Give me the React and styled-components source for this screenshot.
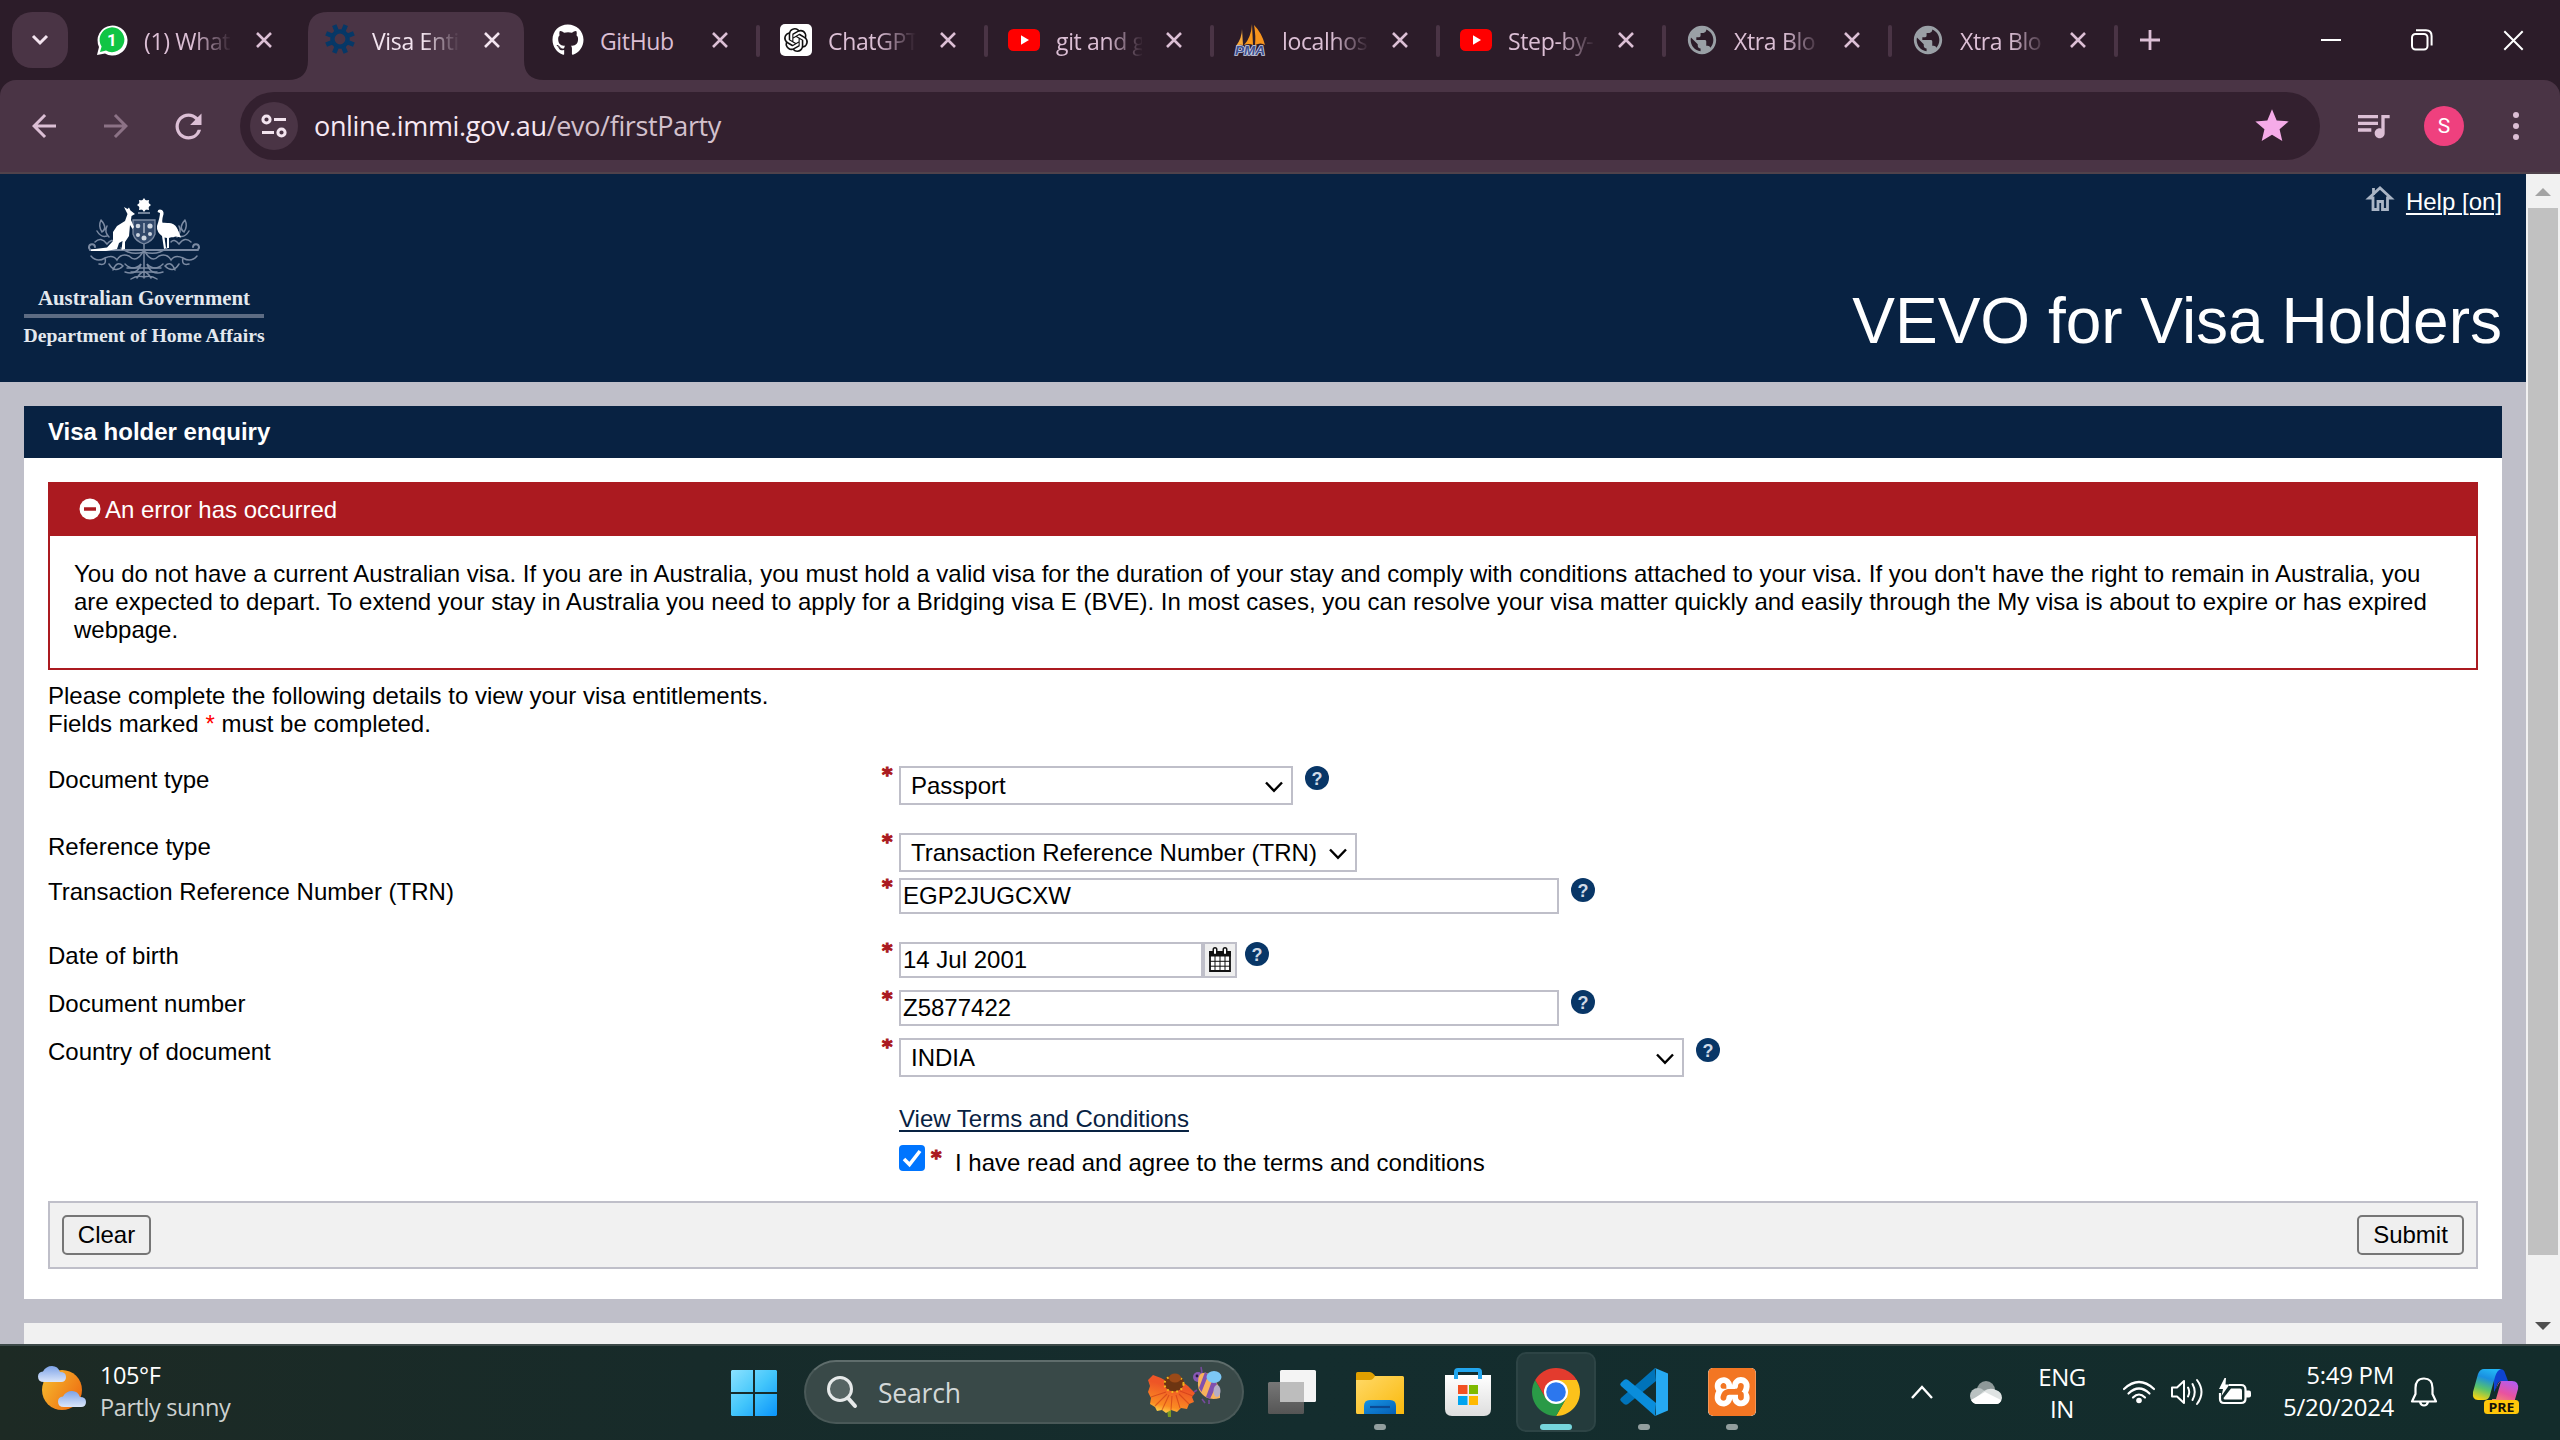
import React from "react";
import styled, { createGlobalStyle, css } from "styled-components";
import { MdArrowBack, MdArrowForward, MdRefresh, MdStar, MdQueueMusic, MdPublic } from "react-icons/md";
import { FaGithub } from "react-icons/fa";
import { SiOpenai, SiXampp } from "react-icons/si";

const ui = `"Open Sans", "Noto Sans", sans-serif`;
const arial = `"Liberation Sans", Arial, sans-serif`;
const navy = "#082242";
const line = "#bfbfc9";

const Global = createGlobalStyle`
  *, *::before, *::after { box-sizing: border-box; }
  html, body { margin: 0; background: ${line}; overflow: hidden; }
  svg { display: block; flex: none; overflow: visible; }
`;

const Screen = styled.div`
  width: 2560px;
  height: 1440px;
  display: flex;
  flex-direction: column;
  overflow: hidden;
`;

/* ---------- browser chrome ---------- */
const TabStrip = styled.div`
  height: 80px;
  flex: none;
  display: flex;
  align-items: flex-start;
  background: #2c1c29;
  padding-left: 12px;
`;
const TabSearch = styled.div`
  width: 56px;
  height: 56px;
  margin: 12px 8px 0 0;
  border-radius: 20px;
  background: #4a3445;
  display: flex;
  align-items: center;
  justify-content: center;
`;
const Tab = styled.div`
  position: relative;
  width: ${(p) => (p.$narrow ? 226 : 228)}px;
  height: 80px;
  flex: none;
  display: flex;
  align-items: center;
  padding-left: 20px;
  z-index: 1;
`;
const ActiveShape = styled.svg`
  position: absolute;
  left: -16px;
  top: 12px;
  z-index: -1;
`;
const Favicon = styled.div`
  width: 32px;
  height: 32px;
  display: flex;
  align-items: center;
  justify-content: center;
  flex: none;
`;
const OpenAiTile = styled.div`
  width: 32px;
  height: 32px;
  border-radius: 5px;
  background: #fff;
  color: #111;
  display: flex;
  align-items: center;
  justify-content: center;
`;
const TabTitle = styled.div`
  width: ${(p) => (p.$narrow ? 86 : 88)}px;
  margin-left: 16px;
  flex: none;
  overflow: hidden;
  white-space: nowrap;
  font: 400 23px/34px ${ui};
  letter-spacing: -0.35px;
  color: ${(p) => (p.$active ? "#f3e4ef" : "#dcbfd5")};
  padding-top: 2px;
  ${(p) => p.$fade && css`mask-image: linear-gradient(90deg, #000 50px, transparent 88px);`}
`;
const TabClose = styled.div`
  width: 16px;
  height: 16px;
  margin-left: 24px;
`;
const Separator = styled.div`
  position: absolute;
  right: 0;
  top: 25px;
  width: 4px;
  height: 32px;
  border-radius: 2px;
  background: #4a3445;
`;
const NewTab = styled.div`
  margin: 30px 0 0 22px;
`;
const WindowButtons = styled.div`
  margin: 29px 36px 0 auto;
  display: flex;
  align-items: center;
  gap: 70px;
`;
const ToolbarBack = styled.div`
  height: 94px;
  flex: none;
  background: #2c1c29;
`;
const Toolbar = styled.div`
  height: 94px;
  display: flex;
  align-items: center;
  background: #4a3445;
  border-bottom: 2px solid #50424b;
  border-radius: 16px 16px 0 0;
  padding-left: 26px;
  color: #dcbfd5;
`;
const NavIcon = styled.div`
  width: 36px;
  height: 36px;
  margin-right: 36px;
  opacity: ${(p) => (p.$dim ? 0.45 : 1)};
  display: flex;
  align-items: center;
  justify-content: center;
`;
const Omnibox = styled.div`
  width: 2080px;
  height: 68px;
  margin-left: -2px;
  border-radius: 34px;
  background: #33202f;
  display: flex;
  align-items: center;
  padding: 0 28px 0 10px;
`;
const SiteInfo = styled.div`
  width: 48px;
  height: 48px;
  border-radius: 24px;
  background: #4a3445;
  display: flex;
  align-items: center;
  justify-content: center;
  margin-right: 16px;
`;
const Url = styled.div`
  flex: 1;
  font: 400 27px/40px ${ui};
  letter-spacing: -0.35px;
  color: #f7e8f3;
`;
const UrlPath = styled.span`
  color: #d3c1cd;
`;
const Media = styled.div`
  margin: -2px 0 0 33px;
`;
const Avatar = styled.div`
  width: 40px;
  height: 40px;
  margin-left: 31px;
  border-radius: 50%;
  background: #ef407e;
  color: #fff;
  font: 400 21px/40px Roboto, sans-serif;
  text-align: center;
`;
const MenuDots = styled.div`
  display: flex;
  flex-direction: column;
  gap: 5px;
  margin-left: 49px;
`;
const Dot = styled.span`
  width: 6px;
  height: 6px;
  border-radius: 3px;
  background: #dcbfd5;
`;

/* ---------- page ---------- */
const Viewport = styled.div`
  height: 1170px;
  flex: none;
  display: flex;
  overflow: hidden;
  font: 400 24px/28px ${arial};
  color: #000;
`;
const Page = styled.div`
  width: 2526px;
  background: ${line};
`;
const Header = styled.header`
  height: 208px;
  background: ${navy};
  color: #fff;
  display: flex;
  justify-content: space-between;
  padding: 0 24px;
`;
const Brand = styled.div`
  width: 240px;
  padding-top: 24px;
  display: flex;
  flex-direction: column;
  align-items: center;
  font: 700 19.6px/22px "Liberation Serif", "Times New Roman", serif;
  color: #e3e8ee;
  white-space: nowrap;
`;
const BrandTop = styled.div`
  margin-top: 7px;
  font-size: 20.8px;
`;
const BrandRule = styled.div`
  width: 240px;
  height: 4px;
  margin: 5px 0 6px;
  background: #5d6c83;
`;
const BrandBottom = styled.div`
  font-size: 19.7px;
`;
const HeaderRight = styled.div`
  display: flex;
  flex-direction: column;
  align-items: flex-end;
`;
const HelpRow = styled.div`
  display: flex;
  align-items: flex-start;
  gap: 13px;
  padding-top: 12px;
`;
const HelpLink = styled.span`
  margin-top: 2px;
  text-decoration: underline;
  text-decoration-thickness: 2px;
  text-underline-offset: 3px;
`;
const AppTitle = styled.h1`
  margin: 68px 0 0;
  font: 400 64px/74px ${arial};
`;
const Panel = styled.section`
  width: 2478px;
  height: 893px;
  margin: 24px 0 0 24px;
  background: #fff;
`;
const PanelTitle = styled.div`
  height: 52px;
  padding: 12px 24px;
  background: ${navy};
  color: #fff;
  font-weight: 700;
`;
const PanelBody = styled.div`
  padding: 24px;
`;
const ErrorBox = styled.div`
  height: 188px;
  border: 2px solid #ab1a20;
`;
const ErrorHead = styled.div`
  height: 52px;
  padding: 12px 0 0 29px;
  background: #ab1a20;
  color: #fff;
  display: flex;
  gap: 4px;
`;
const ErrorIcon = styled.div`
  margin-top: 2px;
`;
const ErrorText = styled.div`
  padding: 24px 24px 0;
`;
const Intro = styled.div`
  margin-top: 12px;
`;
const Star = styled.span`
  color: #f00;
`;
const Required = styled.span`
  margin-top: -2px;
  padding-left: 1px;
  color: #ab1a20;
  font: 700 20px/20px "DejaVu Sans", sans-serif;
  -webkit-text-stroke: 1.1px #ab1a20;
`;
const Row = styled.div`
  display: grid;
  grid-template-columns: 833px 18px auto;
  margin-top: ${(p) => p.$gap}px;
`;
const Controls = styled.div`
  display: flex;
  align-items: flex-start;
`;
const Field = styled.div`
  width: ${(p) => p.$w}px;
  height: 36px;
  border: 2px solid ${line};
  background: #fff;
  padding: 2px;
  white-space: nowrap;
`;
const Select = styled(Field)`
  height: 39px;
  padding: 3.5px 8px 0 10px;
  display: flex;
  justify-content: space-between;
`;
const SelectArrow = styled.div`
  padding-top: 9px;
`;
const CalButton = styled.div`
  width: 34px;
  height: 36px;
  border: 2px solid ${line};
  background: #efefef;
  display: flex;
  align-items: flex-start;
  justify-content: center;
  padding-top: 3px;
`;
const HelpDot = styled.div`
  margin-left: ${(p) => p.$ml || 12}px;
  width: 24px;
  height: 24px;
  border-radius: 50%;
  background: #083667;
  color: #cfdae7;
  font: 700 18px/26px ${arial};
  text-align: center;
`;
const Terms = styled.div`
  margin: 28px 0 0 851px;
  color: ${navy};
  text-decoration: underline;
  text-decoration-thickness: 2px;
  text-underline-offset: 3px;
`;
const Agree = styled.div`
  display: flex;
  margin: 12px 0 0 851px;
`;
const Checkbox = styled.div`
  width: 26px;
  height: 26px;
  border-radius: 4px;
  background: #0075ff;
  margin-right: 5px;
`;
const RequiredSlot = styled.div`
  width: 25px;
  padding-top: 4px;
  display: flex;
  align-items: flex-start;
`;
const AgreeText = styled.div`
  margin-top: 4px;
`;
const ButtonBar = styled.div`
  height: 68px;
  margin-top: 24px;
  padding: 12px;
  border: 2px solid ${line};
  background: #f1f1f1;
  display: flex;
  justify-content: space-between;
`;
const Button = styled.div`
  height: 40px;
  width: ${(p) => p.$w}px;
  border: 2px solid #767676;
  border-radius: 5px;
  background: #efefef;
  line-height: 36px;
  text-align: center;
`;
const Footer = styled.div`
  width: 2478px;
  height: 60px;
  margin: 24px 0 0 24px;
  background: #f1f1f1;
`;
const Scrollbar = styled.div`
  width: 34px;
  background: #f1f1f1;
  display: flex;
  flex-direction: column;
  align-items: center;
  padding: 14px 0;
`;
const Arrow = styled.div`
  border: 8px solid transparent;
  border-top-width: ${(p) => (p.$up ? 0 : 8)}px;
  border-bottom-width: ${(p) => (p.$up ? 8 : 0)}px;
  border-bottom-color: ${(p) => (p.$up ? "#a3a3a3" : "transparent")};
  border-top-color: ${(p) => (p.$up ? "transparent" : "#505050")};
`;
const Thumb = styled.div`
  width: 30px;
  height: 1047px;
  margin: 12px 0 67px;
  background: #c1c1c1;
`;

/* ---------- taskbar ---------- */
const Taskbar = styled.div`
  height: 96px;
  flex: none;
  border-top: 2px solid #3d4a49;
  padding-bottom: 2px;
  background: linear-gradient(90deg, #1d2a24 0, #172b2a 700px, #142d2e 1300px, #132c2b 100%);
  display: flex;
  align-items: center;
  color: #fff;
  font: 400 23.5px/32px ${ui};
`;
const Weather = styled.div`
  width: 731px;
  height: 92px;
  padding: 13px 0 0 38px;
  display: flex;
  gap: 14px;
  letter-spacing: -0.4px;
`;
const WeatherIcon = styled.div`
  padding-top: 6px;
`;
const Muted = styled.div`
  color: #cdd2d1;
`;
const StartButton = styled.div`
  padding-top: 2px;
`;
const SearchBox = styled.div`
  width: 440px;
  height: 64px;
  margin: 0 8px 0 27px;
  border-radius: 32px;
  background: #394948;
  border: 2px solid #4a5958;
  border-top-color: #5f6d6c;
  display: flex;
  align-items: center;
  padding: 0 18px 0 20px;
`;
const SearchText = styled.div`
  flex: 1;
  margin-left: 20px;
  padding-top: 2px;
  color: #d3d8d8;
  font-size: 26.5px;
  letter-spacing: -0.2px;
`;
const AppSlot = styled.div`
  width: 80px;
  height: 80px;
  margin-right: 8px;
  border-radius: 10px;
  display: flex;
  flex-direction: column;
  align-items: center;
  padding-top: 14px;
  border: 2px solid transparent;
  ${(p) => p.$active && css`background: #243b3c; border-color: #2d4445;`}
`;
const Indicator = styled.div`
  width: ${(p) => (p.$active ? 32 : 12)}px;
  height: 6px;
  margin-top: 8px;
  border-radius: 3px;
  background: ${(p) => (p.$active ? "#76d6dc" : "#929e9e")};
`;
const XamppTile = styled.div`
  width: 48px;
  height: 48px;
  border-radius: 5px;
  background: #fff;
  color: #f37623;
  overflow: hidden;
`;
const Tray = styled.div`
  margin-left: auto;
  height: 92px;
  display: flex;
  align-items: center;
`;
const TrayItem = styled.div`
  width: ${(p) => p.$w}px;
  margin-left: ${(p) => p.$ml}px;
`;
const Lang = styled.div`
  width: 60px;
  margin-left: 30px;
  padding-top: 2px;
  text-align: center;
  font-size: 24px;
  letter-spacing: -0.5px;
`;
const Clock = styled.div`
  width: 130px;
  margin-left: 12px;
  text-align: right;
  font-size: 24px;
  letter-spacing: -0.3px;
  margin-top: -3px;
`;

const Cross = ({ size = 16, w = 2.6, color = "currentColor" }) => (
  <svg width={size} height={size} viewBox="0 0 16 16" stroke={color} strokeWidth={w} fill="none">
    <path d="M1 1 15 15M15 1 1 15" />
  </svg>
);
const WhatsApp = () => (
  <svg width="32" height="32" viewBox="0 0 32 32">
    <path d="M1 31 3 23A15 15 0 1 1 9 29.5Z" fill="#fff" />
    <path d="M4 28 5.6 22.5A12.4 12.4 0 1 1 10 26.6Z" fill="#10c544" />
    <text x="16" y="22" textAnchor="middle" fontFamily="Roboto" fontWeight="700" fontSize="17" fill="#fff">1</text>
  </svg>
);
const Gear = () => (
  <svg width="32" height="32" viewBox="0 0 32 32" stroke="#063867" fill="none">
    <circle cx="16" cy="15" r="7.6" strokeWidth="4.4" />
    {[22.5, 67.5, 112.5, 157.5, 202.5, 247.5, 292.5, 337.5].map((a) => (
      <path key={a} d="M16 7V0" strokeWidth="4.6" transform={`rotate(${a} 16 15)`} />
    ))}
  </svg>
);
const YouTube = () => (
  <svg width="32" height="24" viewBox="0 0 32 24">
    <rect y="1" width="32" height="22" rx="5.5" fill="#f00" />
    <path d="M13 7.2 21 12 13 16.8Z" fill="#fff" />
  </svg>
);
const Pma = () => (
  <svg width="32" height="32" viewBox="0 0 32 32">
    <path d="M8 5Q8 14 2 22Q6 20 9 21Z" fill="#f7a93b" />
    <path d="M18 0Q17 14 10 21Q15 19 19 21Z" fill="#f8981d" />
    <path d="M20 1Q28 9 31 21Q27 18 21 21Q22 12 20 1Z" fill="#f7941d" />
    <text x="16" y="31" textAnchor="middle" textLength="30" lengthAdjust="spacingAndGlyphs" fontFamily="Liberation Sans" fontWeight="700" fontStyle="italic" fontSize="13" fill="#3e4f8f" stroke="#ccd2e6" strokeWidth="1.6" paintOrder="stroke">PMA</text>
  </svg>
);

const tabs = [
  { title: "(1) What", icon: <WhatsApp />, fade: true },
  { title: "Visa Enti", icon: <Gear />, active: true, fade: true },
  { title: "GitHub", icon: <FaGithub size={32} color="#fff" />, sep: true },
  { title: "ChatGPT", icon: <OpenAiTile><SiOpenai size={24} /></OpenAiTile>, sep: true, fade: true },
  { title: "git and g", icon: <YouTube />, sep: true, fade: true, narrow: true },
  { title: "localhos", icon: <Pma />, sep: true, fade: true, narrow: true },
  { title: "Step-by-", icon: <YouTube />, sep: true, fade: true, narrow: true },
  { title: "Xtra Blo", icon: <MdPublic size={34} color="#9aa0a6" />, sep: true, fade: true, narrow: true },
  { title: "Xtra Blo", icon: <MdPublic size={34} color="#9aa0a6" />, sep: true, fade: true, narrow: true },
];

const BrowserTabs = () => (
  <TabStrip>
    <TabSearch>
      <svg width="18" height="12" viewBox="0 0 18 12" fill="none" stroke="#f3e4ef" strokeWidth="3"><path d="M2 2 9 9 16 2" /></svg>
    </TabSearch>
    {tabs.map((t, i) => (
      <Tab key={i} $narrow={t.narrow}>
        {t.active && (
          <ActiveShape width="256" height="68" viewBox="0 0 256 68">
            <path d="M0 68Q20 68 20 48V20Q20 0 40 0H216Q236 0 236 20V48Q236 68 256 68Z" fill="#4a3445" />
          </ActiveShape>
        )}
        <Favicon>{t.icon}</Favicon>
        <TabTitle $active={t.active} $fade={t.fade} $narrow={t.narrow}>{t.title}</TabTitle>
        <TabClose><Cross color={t.active ? "#f3e4ef" : "#dcbfd5"} /></TabClose>
        {t.sep && <Separator />}
      </Tab>
    ))}
    <NewTab>
      <svg width="20" height="20" viewBox="0 0 20 20" stroke="#dcbfd5" strokeWidth="2.8"><path d="M10 0V20M0 10H20" /></svg>
    </NewTab>
    <WindowButtons>
      <svg width="20" height="22" viewBox="0 0 20 22" stroke="#fff" strokeWidth="2"><path d="M0 11H20" /></svg>
      <svg width="22" height="22" viewBox="0 0 22 22" stroke="#fff" strokeWidth="2" fill="none">
        <rect x="1" y="5" width="15.5" height="15.5" rx="3.5" />
        <path d="M5 1.3H15Q20.6 1.3 20.6 7V16.5" />
      </svg>
      <Cross size={21} w={1.5} color="#fff" />
    </WindowButtons>
  </TabStrip>
);

const BrowserToolbar = () => (
  <ToolbarBack>
    <Toolbar>
      <NavIcon><MdArrowBack size={36} /></NavIcon>
      <NavIcon $dim><MdArrowForward size={36} /></NavIcon>
      <NavIcon><MdRefresh size={39} /></NavIcon>
      <Omnibox>
        <SiteInfo>
          <svg width="26" height="24" viewBox="0 0 26 24" stroke="#f3e4ef" strokeWidth="3" fill="none">
            <circle cx="5.5" cy="5.5" r="3.6" /><path d="M13 5.5H25M1 18.5H13" /><circle cx="20.5" cy="18.5" r="3.6" />
          </svg>
        </SiteInfo>
        <Url>online.immi.gov.au<UrlPath>/evo/firstParty</UrlPath></Url>
        <MdStar size={40} color="#f5abe8" />
      </Omnibox>
      <Media><MdQueueMusic size={40} /></Media>
      <Avatar>S</Avatar>
      <MenuDots><Dot /><Dot /><Dot /></MenuDots>
    </Toolbar>
  </ToolbarBack>
);

const CoatOfArms = () => (
  <svg width="114" height="82" viewBox="0 0 114 82">
    <g fill="none" stroke="#7b8aa2" strokeWidth="1.5" strokeLinecap="round">
      <path d="M3 52H111M4 52a3 3 0 1 1 4-3M110 52a3 3 0 1 0-4-3" strokeWidth="2" />
      <path d="M14 22Q11 28 15 34Q21 30 14 22M20 28Q17 34 22 39M10 33Q14 40 20 38M8 44Q14 38 20 46Q25 40 28 44" />
      <path d="M98 22Q101 28 97 34Q91 30 98 22M92 28Q95 34 90 39M102 33Q98 40 92 38M104 44Q98 38 92 46Q87 40 84 44" />
      <path d="M4 58Q10 65 18 60Q20 68 12 66M18 60Q26 56 30 62Q34 55 42 58Q50 66 57 52" />
      <path d="M110 58Q104 65 96 60Q94 68 102 66M96 60Q88 56 84 62Q80 55 72 58Q64 66 57 52" />
      <path d="M22 66Q28 76 36 68Q30 62 26 72M38 66Q46 74 54 66Q50 78 38 74M92 66Q86 76 78 68Q84 62 88 72M76 66Q68 74 60 66Q64 78 76 74" />
      <path d="M40 70H74M44 74H70" />
      <path d="M57 46V80M50 80Q57 68 64 80M44 81Q50 77 57 79Q64 77 70 81M34 50Q44 58 57 54Q70 58 80 50" />
    </g>
    <path d="M46 22H68V36Q66 43 57 46Q48 43 46 36Z" fill="#31486a" stroke="#7b8aa2" strokeWidth="1.3" />
    <g fill="#cdd5e0"><circle cx="51" cy="28" r="2.3" /><circle cx="63" cy="28" r="2.6" /><circle cx="51" cy="37" r="2" /><circle cx="63" cy="36" r="2" /><circle cx="57" cy="40" r="2.5" /></g>
    <path d="M57 25V35" stroke="#8d9bb0" strokeWidth="2" />
    <circle cx="57" cy="7" r="5" fill="#fff" />
    <path d="M57 0 58.8 2.6 62 2 61.6 5 64 7 61.6 9 62 12 58.8 11.4 57 14 55.2 11.4 52 12 52.4 9 50 7 52.4 5 52 2 55.2 2.6Z" fill="#fff" />
    <path d="M51 15H63" stroke="#8d9bb0" strokeWidth="1.6" />
    <path d="M37 9 40.5 11 42 9.5 43.5 12.5 48 16 44.5 18 44 22 47 29 45.5 31 43 27 42 38 38 44 38 51 34.5 52 35.5 43 32 45 30 51 19 53 4 53 4 51.5 20 49.5 26 43 26 34 30 28 38 23 40.5 16Z" fill="#fff" />
    <path d="M70.5 14Q71 10.5 75 12Q77.5 14 76 18Q74.5 23 76 26Q86 23 90 30L94 39.5 87 38 82 40 82 50 80 50 80 40 77.5 39.5 79 50 77 51 75 38Q69.5 34 70 28Q73 19 73 15Z" fill="#fff" />
    <ellipse cx="81" cy="32" rx="11" ry="6.5" transform="rotate(22 81 32)" fill="#fff" />
  </svg>
);

const Help = ({ ml }) => <HelpDot $ml={ml}>?</HelpDot>;
const Chevron = () => (
  <svg width="18" height="12" viewBox="0 0 18 12" fill="none" stroke="#000" strokeWidth="2.4"><path d="M1 1.5 9 9.8 17 1.5" /></svg>
);
const Calendar = () => (
  <svg width="24" height="26" viewBox="0 0 24 26">
    <path d="M2 6H22V24H2Z" fill="#fff" stroke="#111" strokeWidth="1.8" />
    <path d="M1 4H23V9.5H1Z" fill="#111" />
    <path d="M2 14.3H22M2 19.2H22M7 9V24M12 9V24M17 9V24" stroke="#111" strokeWidth="1" />
    <path d="M7 2.5V6M17 2.5V6" stroke="#111" strokeWidth="5" strokeLinecap="round" />
    <path d="M7 2.5V6M17 2.5V6" stroke="#fff" strokeWidth="2" strokeLinecap="round" />
  </svg>
);

const FormRow = ({ label, gap, children }) => (
  <Row $gap={gap}>
    <div>{label}</div>
    <Required>*</Required>
    <Controls>{children}</Controls>
  </Row>
);
const SelectBox = ({ w, children }) => (
  <Select $w={w}><span>{children}</span><SelectArrow><Chevron /></SelectArrow></Select>
);

const VisaPage = () => (
  <Viewport>
    <Page>
      <Header>
        <Brand>
          <CoatOfArms />
          <BrandTop>Australian Government</BrandTop>
          <BrandRule />
          <BrandBottom>Department of Home Affairs</BrandBottom>
        </Brand>
        <HeaderRight>
          <HelpRow>
            <svg width="26" height="25" viewBox="0 0 26 25" fill="none" stroke="#aab5c5" strokeWidth="2.8">
              <path d="M2 12 13 2 24 12H20.5V23.5H15.5V15.5H11V23.5H6V12Z" /><path d="M6.5 9V2" />
            </svg>
            <HelpLink>Help [on]</HelpLink>
          </HelpRow>
          <AppTitle>VEVO for Visa Holders</AppTitle>
        </HeaderRight>
      </Header>
      <Panel>
        <PanelTitle>Visa holder enquiry</PanelTitle>
        <PanelBody>
          <ErrorBox>
            <ErrorHead>
              <ErrorIcon>
                <svg width="22" height="22" viewBox="0 0 22 22"><circle cx="11" cy="11" r="10.5" fill="#fff" /><path d="M5 11H17" stroke="#ab1a20" strokeWidth="3.5" /></svg>
              </ErrorIcon>
              An error has occurred
            </ErrorHead>
            <ErrorText>
              You do not have a current Australian visa. If you are in Australia, you must hold a valid visa for the duration of your stay and comply with conditions attached to your visa. If you don't have the right to remain in Australia, you<br />
              are expected to depart. To extend your stay in Australia you need to apply for a Bridging visa E (BVE). In most cases, you can resolve your visa matter quickly and easily through the My visa is about to expire or has expired<br />
              webpage.
            </ErrorText>
          </ErrorBox>
          <Intro>
            Please complete the following details to view your visa entitlements.<br />
            Fields marked <Star>*</Star> must be completed.
          </Intro>
          <FormRow gap={28} label="Document type"><SelectBox w={394}>Passport</SelectBox><Help /></FormRow>
          <FormRow gap={28} label="Reference type"><SelectBox w={458}>Transaction Reference Number (TRN)</SelectBox></FormRow>
          <FormRow gap={6} label="Transaction Reference Number (TRN)"><Field $w={660}>EGP2JUGCXW</Field><Help /></FormRow>
          <FormRow gap={28} label="Date of birth"><Field $w={304}>14 Jul 2001</Field><CalButton><Calendar /></CalButton><Help ml={8} /></FormRow>
          <FormRow gap={12} label="Document number"><Field $w={660}>Z5877422</Field><Help /></FormRow>
          <FormRow gap={12} label="Country of document"><SelectBox w={785}>INDIA</SelectBox><Help /></FormRow>
          <Terms>View Terms and Conditions</Terms>
          <Agree>
            <Checkbox>
              <svg width="26" height="26" viewBox="0 0 26 26" fill="none" stroke="#fff" strokeWidth="3.6"><path d="M5 14 10.5 19.5 21 6" /></svg>
            </Checkbox>
            <RequiredSlot><Required>*</Required></RequiredSlot>
            <AgreeText>I have read and agree to the terms and conditions</AgreeText>
          </Agree>
          <ButtonBar><Button $w={89}>Clear</Button><Button $w={107}>Submit</Button></ButtonBar>
        </PanelBody>
      </Panel>
      <Footer />
    </Page>
    <Scrollbar><Arrow $up /><Thumb /><Arrow /></Scrollbar>
  </Viewport>
);

const cloudPath = "M6 16Q0 16 0 10.5 0 6 5 5.5 8 0 14 0 20 0 22 6 28 6 28 11 28 16 23 16Z";
const WeatherArt = () => (
  <svg width="48" height="46" viewBox="0 0 48 46">
    <defs>
      <linearGradient id="sun" x1="0" y1="0.2" x2="1" y2="0.8"><stop offset="0" stopColor="#f5b92e" /><stop offset="1" stopColor="#ee6a10" /></linearGradient>
      <linearGradient id="cl" x1="0" y1="0" x2="0" y2="1"><stop offset="0" stopColor="#7da3e8" /><stop offset="1" stopColor="#dbe6fa" /></linearGradient>
    </defs>
    <circle cx="24" cy="25" r="20" fill="url(#sun)" />
    <path d={cloudPath} fill="url(#cl)" transform="translate(0 1)" />
    <path d={cloudPath} fill="url(#cl)" transform="translate(20 26)" />
  </svg>
);
const StartLogo = () => (
  <svg width="46" height="46" viewBox="0 0 46 46">
    <defs><linearGradient id="win" x1="0" y1="0" x2="1" y2="1"><stop offset="0" stopColor="#8be2ff" /><stop offset="0.5" stopColor="#43c6fb" /><stop offset="1" stopColor="#0a94fb" /></linearGradient></defs>
    <path d="M1 0H22V22H0V1ZM24 0H45L46 1V22H24ZM0 24H22V46H1L0 45ZM24 24H46V45L45 46H24Z" fill="url(#win)" />
  </svg>
);
const Flower = () => (
  <svg width="76" height="50" viewBox="0 0 76 50">
    <defs><linearGradient id="petal" x1="0.6" y1="0" x2="0.3" y2="1"><stop offset="0.3" stopColor="#ee5526" /><stop offset="0.8" stopColor="#fb8b22" /><stop offset="1" stopColor="#ffd84a" /></linearGradient></defs>
    <path d="M19 42H23V50H20Z" fill="#7c9a1f" />
    <g transform="translate(0 3)">
      <path d="M5 5 0 10 2 16 0 22 3 28 2 34 7 37 9 41 14 40 18 43 23 40 29 42 33 38 39 39 41 34 46 32 44 27 47 23 40 16 32 10 20 12 13 8Z" fill="url(#petal)" />
      <g stroke="#c93616" strokeWidth="1.1" opacity="0.6"><path d="M18 22 3 27M19 24 7 36M21 25 14 40M24 26 23 40M28 25 32 38M31 24 41 34M32 21 45 26" /></g>
      <ellipse cx="26" cy="13" rx="10" ry="8.5" fill="#6d3512" />
      <ellipse cx="26" cy="14" rx="9.5" ry="8" fill="none" stroke="#f6b91c" strokeWidth="2" strokeDasharray="1.8 3" />
      <ellipse cx="27" cy="8" rx="6" ry="4.5" fill="#9b4a18" />
    </g>
    <g>
      <path d="M54 32 57 36M61 33V37M49 23 46 25M54 6 53 0" stroke="#754a9c" strokeWidth="1.6" />
      <circle cx="50" cy="10" r="5" fill="#8858b4" /><circle cx="49" cy="9" r="1.4" fill="#2b1a40" />
      <path d="M50 15Q50 4 59 6Q73 15 72 31Q60 34 54 27Q49 22 50 15Z" fill="#f8b25c" />
      <path d="M57 5 51 21 53.5 25 60.5 7.5ZM65 11 58 30 62 32 69 17Z" fill="#8050ae" />
      <ellipse cx="66" cy="10" rx="7.5" ry="6" fill="#7cc7f6" /><ellipse cx="69" cy="24" rx="3.5" ry="6" fill="#b5adc6" />
    </g>
  </svg>
);
const TaskView = () => (
  <svg width="48" height="48" viewBox="0 0 48 48">
    <defs><linearGradient id="tv" x1="0" y1="0" x2="0" y2="1"><stop offset="0" stopColor="#777" /><stop offset="1" stopColor="#555" /></linearGradient></defs>
    <rect x="0" y="14" width="36" height="32" rx="1.5" fill="url(#tv)" /><rect x="12" y="2" width="36" height="32" rx="1.5" fill="#f4f4f4" /><path d="M12 14H36V34H13L12 33Z" fill="#bdbdbd" />
  </svg>
);
const Explorer = () => (
  <svg width="48" height="48" viewBox="0 0 48 48">
    <defs>
      <linearGradient id="fo" x1="0" y1="0" x2="1" y2="1"><stop offset="0" stopColor="#ffd968" /><stop offset="1" stopColor="#fab90c" /></linearGradient>
      <linearGradient id="fb" x1="0" y1="0" x2="1" y2="1"><stop offset="0" stopColor="#1793e4" /><stop offset="1" stopColor="#0560b6" /></linearGradient>
    </defs>
    <path d="M0 5.5Q0 4 1.5 4H14Q16 4 18 6.5L20 9V16H0Z" fill="#e0a000" />
    <path d="M0 12H14Q17 12 19 8H46.5Q48 8 48 9.5V46H1.5Q0 46 0 44.5Z" fill="url(#fo)" />
    <path d="M8 46V38Q8 32 14 32H34Q40 32 40 38V46Z" fill="url(#fb)" /><path d="M14 39H34" stroke="#0b4a94" strokeWidth="2.2" />
  </svg>
);
const Store = () => (
  <svg width="48" height="48" viewBox="0 0 48 48">
    <defs><linearGradient id="st" x1="0" y1="0" x2="0" y2="1"><stop offset="0" stopColor="#fff" /><stop offset="1" stopColor="#dedede" /></linearGradient></defs>
    <path d="M1 7H47V41Q47 48 40 48H8Q1 48 1 41Z" fill="url(#st)" />
    <path d="M12 11V4Q12 2 14 2H34Q36 2 36 4V11" fill="none" stroke="#22a6ee" strokeWidth="4" />
    <path d="M14 17H23.5V26H14Z" fill="#f25022" /><path d="M25 17H34V26H25Z" fill="#7fba00" /><path d="M14 28H23.5V37H14Z" fill="#00a4ef" /><path d="M25 28H34V37H25Z" fill="#ffb900" />
  </svg>
);
const ChromeLogo = () => (
  <svg width="48" height="48" viewBox="0 0 48 48">
    <path d="M24 24 3.22 12A24 24 0 0 1 44.78 12Z" fill="#e33b2e" />
    <path d="M24 12H44.78A24 24 0 0 1 24 48L34.39 30Z" fill="#fcc21b" />
    <path d="M13.61 30 3.22 12A24 24 0 0 0 24 48L34.39 30Z" fill="#2a9a47" />
    <path d="M3.22 12 13.61 30 24 12Z" fill="#e33b2e" />
    <circle cx="24" cy="24" r="12" fill="#fff" /><circle cx="24" cy="24" r="9.8" fill="#2c77ee" />
  </svg>
);
const CodeLogo = () => (
  <svg width="48" height="48" viewBox="0 0 48 48">
    <path d="M35 0 36 13 8 36Q6 37.5 4 36L0.8 33Q-0.5 31.5 1 30Z" fill="#0073ba" />
    <path d="M35 48 36 35 8 12Q6 10.5 4 12L0.8 15Q-0.5 16.5 1 18Z" fill="#0a8ddb" />
    <path d="M35 0 48 5.5V42.5L35 48Q36 47 36 45V3Q36 1 35 0Z" fill="#26a9f2" />
  </svg>
);
const taskApps = [
  { icon: <TaskView />, none: true },
  { icon: <Explorer /> },
  { icon: <Store />, none: true },
  { icon: <ChromeLogo />, active: true },
  { icon: <CodeLogo /> },
  { icon: <XamppTile><SiXampp size={48} /></XamppTile> },
];

const CloudIcon = () => (
  <svg width="32" height="23" viewBox="0 0 32 23">
    <circle cx="16" cy="9" r="9" fill="#8e9999" /><circle cx="8" cy="15" r="8" fill="#b9c1c1" /><path d="M14 10Q20 6 26 9 32 11 32 17 31 23 26 23H6L2 20Z" fill="#dfe3e3" /><path d="M1 19 15 11 31 19Q30 23 26 23H7Q3 23 1 19Z" fill="#fff" />
  </svg>
);
const Wifi = () => (
  <svg width="32" height="24" viewBox="0 0 32 24" fill="none" stroke="#fff" strokeWidth="2.2" strokeLinecap="round">
    <path d="M1 9Q16-5 31 9M5.5 13.5Q16 3.5 26.5 13.5M10 17.5Q16 11.5 22 17.5" /><circle cx="16" cy="20.5" r="2.8" fill="#fff" stroke="none" />
  </svg>
);
const Volume = () => (
  <svg width="32" height="28" viewBox="0 0 32 28" fill="none" stroke="#fff" strokeWidth="2" strokeLinecap="round" strokeLinejoin="round">
    <path d="M1 9.5H6L13 3V25L6 18.5H1ZM17 9.5Q19.5 14 17 18.5M21.5 6Q26 14 21.5 22M26 2Q35 14 26 26" />
  </svg>
);
const Battery = () => (
  <svg width="34" height="28" viewBox="0 0 34 28">
    <path d="M11 7H23Q27.5 7 27.5 11.5V20.5Q27.5 25 23 25H6Q2 25 2 21V15" fill="none" stroke="#fff" strokeWidth="2.2" />
    <path d="M28 12.5H31Q33 12.5 33 14.5V17.5Q33 19.5 31 19.5H28Z" fill="#fff" />
    <path d="M13 10.5H22Q24 10.5 24 12.5V21.5H7Q5.5 21.5 5.5 20Z" fill="#fff" /><path d="M6.5 0 1 11H5L3.5 18 11.5 6.5H7.5L8 0Z" fill="#fff" />
  </svg>
);
const Bell = () => (
  <svg width="26" height="30" viewBox="0 0 26 30" fill="none" stroke="#fff" strokeWidth="2.2" strokeLinejoin="round">
    <path d="M13 1.5Q21.5 1.5 21.5 11V17L25 24.5H1L4.5 17V11Q4.5 1.5 13 1.5ZM9 25Q10 28.5 13 28.5T17 25" />
  </svg>
);
const Copilot = () => (
  <svg width="48" height="48" viewBox="0 0 48 48">
    <defs>
      <linearGradient id="ca" x1="0.6" y1="0" x2="0.3" y2="1"><stop offset="0" stopColor="#22b5f4" /><stop offset="0.3" stopColor="#1a8fe0" /><stop offset="0.65" stopColor="#59c36a" /><stop offset="1" stopColor="#f6d313" /></linearGradient>
      <linearGradient id="cb" x1="0.8" y1="0" x2="0.2" y2="1"><stop offset="0" stopColor="#b45cf0" /><stop offset="0.5" stopColor="#e852a0" /><stop offset="1" stopColor="#fb9a5c" /></linearGradient>
    </defs>
    <path d="M22 1H28Q32 1 33 5L36 13H30Q26 13 25 17L22 26Z" fill="#0e43cf" />
    <path d="M30 13H40Q47 13 46 21L42 35H12Q19 35 21 30L25.5 17Q27 13 30 13Z" fill="url(#cb)" />
    <path d="M26 17 18 31H24L29 13.5Q27 14 26 17Z" fill="#142d2d" />
    <path d="M12 1H29Q25 2 23 9L18 27Q17 32 12 32H6Q0 32 1 24L6 6Q8 1 12 1Z" fill="url(#ca)" />
    <rect x="12" y="32" width="35" height="14" rx="3.5" fill="#ffc60a" />
    <text x="29.5" y="43.8" textAnchor="middle" textLength="26" lengthAdjust="spacingAndGlyphs" fontFamily="Open Sans" fontWeight="700" fontSize="13" fill="#16120a">PRE</text>
  </svg>
);

const WindowsTaskbar = () => (
  <Taskbar>
    <Weather>
      <WeatherIcon><WeatherArt /></WeatherIcon>
      <div><div>105°F</div><Muted>Partly sunny</Muted></div>
    </Weather>
    <StartButton><StartLogo /></StartButton>
    <SearchBox>
      <svg width="32" height="34" viewBox="0 0 32 34" fill="none" stroke="#e6e9e9"><circle cx="14" cy="14" r="11.5" strokeWidth="3" fill="#566463" /><path d="M22 23 29 31" strokeWidth="4" strokeLinecap="round" /></svg>
      <SearchText>Search</SearchText>
      <Flower />
    </SearchBox>
    {taskApps.map((a, i) => (
      <AppSlot key={i} $active={a.active}>{a.icon}{!a.none && <Indicator $active={a.active} />}</AppSlot>
    ))}
    <Tray>
      <TrayItem $w={22}><svg width="22" height="14" viewBox="0 0 22 14" fill="none" stroke="#fff" strokeWidth="2.4"><path d="M1 13 11 2 21 13" /></svg></TrayItem>
      <TrayItem $w={32} $ml={37}><CloudIcon /></TrayItem>
      <Lang>ENG<br />IN</Lang>
      <TrayItem $w={32} $ml={31}><Wifi /></TrayItem>
      <TrayItem $w={32} $ml={16}><Volume /></TrayItem>
      <TrayItem $w={34} $ml={15}><Battery /></TrayItem>
      <Clock>5:49 PM<br />5/20/2024</Clock>
      <TrayItem $w={26} $ml={17}><Bell /></TrayItem>
      <TrayItem $w={88} $ml={35}><Copilot /></TrayItem>
    </Tray>
  </Taskbar>
);

export default function App() {
  return (
    <Screen>
      <Global />
      <BrowserTabs />
      <BrowserToolbar />
      <VisaPage />
      <WindowsTaskbar />
    </Screen>
  );
}
